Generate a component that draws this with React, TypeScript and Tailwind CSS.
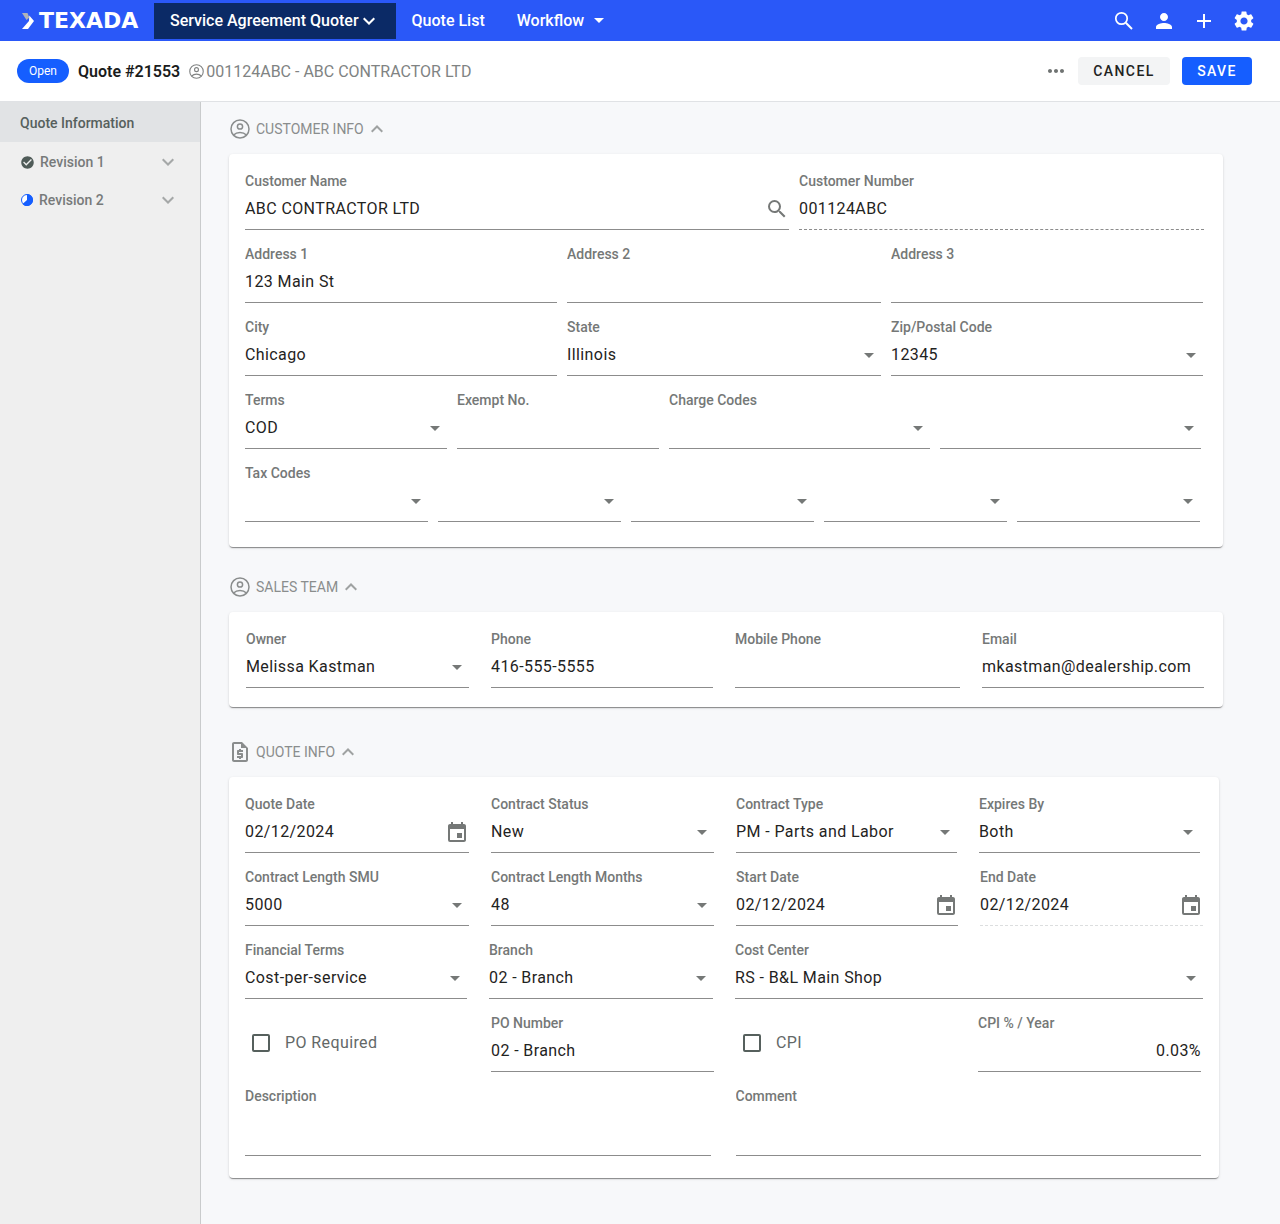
import { useId, useState, type ReactNode } from "react";
import { clsx } from "clsx";
import { MdAdd, MdCheckCircle, MdEvent, MdMoreHoriz, MdOutlineRequestQuote, MdPerson, MdSearch, MdSettings } from "react-icons/md";

const LINE = "w-full border-b border-[#8c8c8c] bg-transparent pb-1 text-base tracking-wide text-[#1f2322] outline-none focus:border-[#155eff]";

function Triangle({ className }: { className?: string }) {
  return (
    <svg viewBox="0 0 10 5" className={clsx("h-[5px] w-[10px]", className)} fill="currentColor" aria-hidden="true">
      <path d="M0 0h10L5 5z" />
    </svg>
  );
}

function Chevron({ up, className }: { up?: boolean; className?: string }) {
  return (
    <svg viewBox="0 0 12 8" className={clsx("h-2 w-3", className)} fill="none" stroke="currentColor" strokeWidth="2" aria-hidden="true">
      <path d={up ? "M0.7 6.8 6 1.5l5.3 5.3" : "M0.7 1.2 6 6.5l5.3-5.3"} />
    </svg>
  );
}

function AccountIcon({ className }: { className?: string }) {
  return (
    <svg viewBox="0 0 20 20" className={className} fill="none" stroke="currentColor" strokeWidth="1.5" aria-hidden="true">
      <circle cx="10" cy="10" r="9" />
      <circle cx="10" cy="7.5" r="2.6" />
      <path d="M3.6 16c1.7-1.7 4-2.5 6.4-2.5s4.7.8 6.4 2.5" />
    </svg>
  );
}

function Logo() {
  return (
    <a href="#home" className="flex w-[154px] items-center gap-[5px] pl-[22px] text-white">
      <svg viewBox="0 0 12 16" className="h-4 w-3 shrink-0" aria-hidden="true">
        <path d="M0 0h5.5l1.8 4.5L4.5 7z" fill="#b0b3b8" />
        <path d="M7.3 2.5 12 8 6 16H0l7-8z" fill="#fff" />
      </svg>
      <span className="font-['DejaVu_Sans'] text-[22px] leading-none font-bold">TEXADA</span>
    </a>
  );
}

interface FieldProps {
  label?: string;
  name?: string;
  value?: string;
  kind?: "text" | "select" | "date" | "search" | "area";
  line?: string;
  align?: string;
}

function Field({ label, name, value = "", kind = "text", line, align }: FieldProps) {
  const id = useId();
  const [current, setCurrent] = useState(value);
  const aria = label ? undefined : name;

  return (
    <div className="min-w-0">
      {label && (
        <label htmlFor={id} className="block h-5 truncate text-sm leading-5 font-medium text-[#757877]">
          {label}
        </label>
      )}
      <div className="relative">
        {kind === "select" && (
          <>
            <select
              id={id}
              aria-label={aria}
              className={clsx(LINE, "block h-[39px] appearance-none pt-0.5 pr-6")}
              value={current}
              onChange={(e) => setCurrent(e.target.value)}
            >
              <option value={value}>{value}</option>
            </select>
            <Triangle className="pointer-events-none absolute top-4 right-[7px] text-[#757877]" />
          </>
        )}
        {kind === "area" && (
          <textarea
            id={id}
            className={clsx(LINE, "block h-[50px] resize-none")}
            value={current}
            onChange={(e) => setCurrent(e.target.value)}
          />
        )}
        {kind !== "select" && kind !== "area" && (
          <input
            id={id}
            type="text"
            aria-label={aria}
            className={clsx(LINE, "block h-[39px]", line, align)}
            value={current}
            onChange={(e) => setCurrent(e.target.value)}
          />
        )}
        {kind === "date" && (
          <button type="button" aria-label="Open calendar" className="absolute top-[7px] right-0 text-[#757877]">
            <MdEvent className="size-6" />
          </button>
        )}
        {kind === "search" && (
          <button type="button" aria-label="Search" className="absolute top-[6px] right-0 text-[#757877]">
            <MdSearch className="size-6" />
          </button>
        )}
      </div>
    </div>
  );
}

function CheckField({ label }: { label: string }) {
  return (
    <label className="flex items-center gap-[15px] self-center pl-[7px] text-base tracking-wide text-[#636867]">
      <input type="checkbox" className="size-[18px] appearance-none rounded-[2px] border-2 border-[#56605d] checked:bg-[#155eff]" />
      {label}
    </label>
  );
}

function Section({ title, icon, className, children }: { title: string; icon: ReactNode; className: string; children: ReactNode }) {
  const [open, setOpen] = useState(true);
  return (
    <section>
      <h2 className="h-[50px]">
        <button type="button" onClick={() => setOpen(!open)} className="flex h-full items-center text-sm text-[#8a8d8d]">
          <span className="flex w-[27px] items-center">{icon}</span>
          {title}
          <Chevron up={open} className="ml-[7px] text-[#9fa2a2]" />
        </button>
      </h2>
      {open && (
        <div
          className={clsx(
            "flex flex-col gap-[14px] rounded bg-white pt-[17px] shadow-[0_2px_1px_-1px_rgba(0,0,0,0.3),0_1px_1px_rgba(0,0,0,0.14),0_1px_3px_rgba(0,0,0,0.12)]",
            className,
          )}
        >
          {children}
        </div>
      )}
    </section>
  );
}

function Row({ className, children }: { className: string; children: ReactNode }) {
  return <div className={clsx("grid items-end", className)}>{children}</div>;
}

function TopBar() {
  return (
    <header className="flex h-[41px] items-center bg-[#2a58f8] text-base font-medium text-white">
      <Logo />
      <nav className="flex items-center">
        <button type="button" className="flex h-9 items-center gap-1 bg-[#0b2a66] pr-[21px] pl-4">
          Service Agreement Quoter
          <Chevron />
        </button>
        <a href="#quotes" className="px-4">
          Quote List
        </a>
        <button type="button" className="flex items-center gap-[10px] px-4">
          Workflow
          <Triangle />
        </button>
      </nav>
      <div className="ml-auto flex items-center gap-4 pr-6">
        <button type="button" aria-label="Search">
          <svg viewBox="0 0 24 24" className="size-6" fill="none" stroke="currentColor" strokeWidth="1.7" aria-hidden="true">
            <circle cx="9.5" cy="9.5" r="5.7" />
            <path d="m13.8 13.8 6.2 6.2" strokeWidth="2" />
          </svg>
        </button>
        <button type="button" aria-label="Account">
          <MdPerson className="size-6" />
        </button>
        <button type="button" aria-label="Add">
          <MdAdd className="size-6" />
        </button>
        <button type="button" aria-label="Settings">
          <MdSettings className="size-6" />
        </button>
      </div>
    </header>
  );
}

function QuoteBar() {
  return (
    <div className="flex h-[61px] items-center border-b border-[#e0e2e5] bg-white pr-7 pl-[17px]">
      <span className="flex h-6 w-[52px] items-center justify-center rounded-full bg-[#155eff] text-xs text-white">Open</span>
      <h1 className="ml-[9px] pt-px text-base font-semibold text-[#1a1c1c]">Quote #21553</h1>
      <p className="ml-[9px] flex items-center gap-[2px] pt-px text-base text-[#808383]">
        <AccountIcon className="size-[15px]" />
        001124ABC - ABC CONTRACTOR LTD
      </p>
      <div className="ml-auto flex items-center gap-3">
        <div className="flex items-center gap-[10px]">
          <button type="button" aria-label="More actions" className="text-[#6f7372]">
            <MdMoreHoriz className="size-6" />
          </button>
          <button type="button" className="h-7 w-[92px] rounded bg-[#f3f4f5] text-sm font-medium tracking-widest text-[#1f2322]">
            CANCEL
          </button>
        </div>
        <button type="button" className="h-7 w-[70px] rounded bg-[#155eff] text-sm font-medium tracking-widest text-white">
          SAVE
        </button>
      </div>
    </div>
  );
}

function Sidebar() {
  return (
    <aside className="w-[201px] shrink-0 border-r border-[#c9cbcc] bg-[#efefef] text-sm font-medium text-[#777a7a]">
      <a href="#info" className="flex h-10 items-center bg-[#e1e3e5] px-5 pt-0.5 text-[#56605d]">
        Quote Information
      </a>
      <button type="button" className="mt-px flex h-[38px] w-full items-center pr-[26px] pl-5">
        <MdCheckCircle className="mr-[5px] size-[15px] text-[#4f5b58]" />
        Revision 1
        <Chevron className="ml-auto text-[#a5a8a8]" />
      </button>
      <button type="button" className="flex h-[38px] w-full items-center pr-[26px] pl-[21px]">
        <svg viewBox="0 0 12 12" className="mr-[6px] size-3" aria-hidden="true">
          <circle cx="6" cy="6" r="5.5" fill="#fff" stroke="#155eff" />
          <path d="M6 6V0a6 6 0 1 1-4.5 10z" fill="#155eff" />
        </svg>
        Revision 2
        <Chevron className="ml-auto text-[#a5a8a8]" />
      </button>
    </aside>
  );
}

export default function App() {
  return (
    <div className="flex min-h-screen flex-col bg-[#f7f8fa] font-['Roboto',sans-serif]">
      <TopBar />
      <QuoteBar />
      <div className="flex flex-1">
        <Sidebar />
        <main className="min-w-0 flex-1 pt-[2px] pr-[57px] pb-[45px] pl-7">
          <Section title="CUSTOMER INFO" icon={<AccountIcon className="ml-px size-5" />} className="pr-[19px] pb-[25px] pl-4">
            <Row className="grid-cols-[544fr_405fr] gap-[10px]">
              <Field label="Customer Name" value="ABC CONTRACTOR LTD" kind="search" />
              <Field label="Customer Number" value="001124ABC" line="border-dashed" />
            </Row>
            <Row className="grid-cols-[312fr_314fr_312fr] gap-[10px] pr-px">
              <Field label="Address 1" value="123 Main St" />
              <Field label="Address 2" />
              <Field label="Address 3" />
            </Row>
            <Row className="grid-cols-[312fr_314fr_312fr] gap-[10px] pr-px">
              <Field label="City" value="Chicago" />
              <Field label="State" value="Illinois" kind="select" />
              <Field label="Zip/Postal Code" value="12345" kind="select" />
            </Row>
            <Row className="grid-cols-[202fr_202fr_261fr_261fr] gap-[10px] pr-[3px]">
              <Field label="Terms" value="COD" kind="select" />
              <Field label="Exempt No." />
              <Field label="Charge Codes" kind="select" />
              <Field name="Charge code 2" kind="select" />
            </Row>
            <Row className="grid-cols-5 gap-[10px] pr-1">
              <Field label="Tax Codes" kind="select" />
              <Field name="Tax code 2" kind="select" />
              <Field name="Tax code 3" kind="select" />
              <Field name="Tax code 4" kind="select" />
              <Field name="Tax code 5" kind="select" />
            </Row>
          </Section>

          <div className="mt-[15px]">
            <Section title="SALES TEAM" icon={<AccountIcon className="ml-px size-5" />} className="pr-[19px] pb-[19px] pl-[17px]">
              <Row className="grid-cols-[223fr_222fr_225fr_222fr] gap-[22px]">
                <Field label="Owner" value="Melissa Kastman" kind="select" />
                <Field label="Phone" value="416-555-5555" />
                <Field label="Mobile Phone" />
                <Field label="Email" value="mkastman@dealership.com" />
              </Row>
            </Section>
          </div>

          <div className="mt-5 pr-1">
            <Section title="QUOTE INFO" icon={<MdOutlineRequestQuote className="-ml-px size-6" />} className="pr-4 pb-[22px] pl-4">
              <Row className="grid-cols-[224fr_223fr_221fr_221fr] gap-[22px] pr-[3px]">
                <Field label="Quote Date" value="02/12/2024" kind="date" />
                <Field label="Contract Status" value="New" kind="select" />
                <Field label="Contract Type" value="PM - Parts and Labor" kind="select" />
                <Field label="Expires By" value="Both" kind="select" />
              </Row>
              <Row className="grid-cols-[224fr_223fr_222fr_223fr] gap-[22px]">
                <Field label="Contract Length SMU" value="5000" kind="select" />
                <Field label="Contract Length Months" value="48" kind="select" />
                <Field label="Start Date" value="02/12/2024" kind="date" />
                <Field label="End Date" value="02/12/2024" kind="date" line="border-dashed border-[#dcdedf]" />
              </Row>
              <Row className="grid-cols-[222fr_224fr_468fr] gap-[22px]">
                <Field label="Financial Terms" value="Cost-per-service" kind="select" />
                <Field label="Branch" value="02 - Branch" kind="select" />
                <Field label="Cost Center" value="RS - B&L Main Shop" kind="select" />
              </Row>
              <Row className="grid-cols-[224fr_223fr_220fr_223fr] gap-[22px] pr-[2px]">
                <CheckField label="PO Required" />
                <Field label="PO Number" value="02 - Branch" />
                <CheckField label="CPI" />
                <Field label="CPI % / Year" value="0.03%" align="text-right" />
              </Row>
              <Row className="grid-cols-2 gap-[25px] pr-[2px]">
                <Field label="Description" kind="area" />
                <Field label="Comment" kind="area" />
              </Row>
            </Section>
          </div>
        </main>
      </div>
    </div>
  );
}
